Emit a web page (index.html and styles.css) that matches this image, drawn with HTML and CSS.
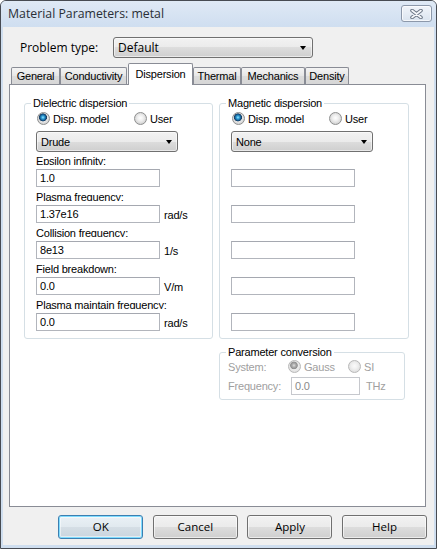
FILE: index.html
```html
<!DOCTYPE html>
<html>
<head>
<meta charset="utf-8">
<link rel="stylesheet" href="styles.css">
</head>
<body>
<div class="window">
  <div class="titlebar">
    <span class="title">Material Parameters: metal</span>
    <div class="close">
      <svg width="13" height="10" viewBox="0 0 13 10">
        <path d="M2 1.5 L11 8.5 M11 1.5 L2 8.5" stroke="#6c7786" stroke-width="3.6" stroke-linecap="round" fill="none"/>
        <path d="M2 1.5 L11 8.5 M11 1.5 L2 8.5" stroke="#f6f8fb" stroke-width="1.6" stroke-linecap="round" fill="none"/>
      </svg>
    </div>
  </div>
  <div class="client">
    <div class="problem-row">
      <span class="problem-label">Problem type:</span>
      <div class="combo combo-problem"><span class="combo-text">Default</span><i class="arrow"></i></div>
    </div>
    <div class="tabstrip">
      <div class="tab t-general">General</div>
      <div class="tab t-cond">Conductivity</div>
      <div class="tab tab-sel t-disp">Dispersion</div>
      <div class="tab t-thermal">Thermal</div>
      <div class="tab t-mech">Mechanics</div>
      <div class="tab t-dens">Density</div>
    </div>
    <div class="panel">
      <fieldset class="group group-diel">
        <legend>Dielectric dispersion</legend>
        <div class="radio-row">
          <span class="ritem ritem-first"><i class="radio on"></i>Disp. model</span>
          <span class="ritem"><i class="radio"></i>User</span>
        </div>
        <div class="combo combo-small"><span class="combo-text">Drude</span><i class="arrow"></i></div>
        <div class="field"><div class="flabel">Epsilon infinity:</div><div class="frow"><div class="tbox">1.0</div></div></div>
        <div class="field"><div class="flabel">Plasma frequency:</div><div class="frow"><div class="tbox">1.37e16</div><span class="unit">rad/s</span></div></div>
        <div class="field"><div class="flabel">Collision frequency:</div><div class="frow"><div class="tbox">8e13</div><span class="unit">1/s</span></div></div>
        <div class="field"><div class="flabel">Field breakdown:</div><div class="frow"><div class="tbox">0.0</div><span class="unit">V/m</span></div></div>
        <div class="field"><div class="flabel">Plasma maintain frequency:</div><div class="frow"><div class="tbox">0.0</div><span class="unit">rad/s</span></div></div>
      </fieldset>
      <div class="right-col">
        <fieldset class="group group-mag">
          <legend>Magnetic dispersion</legend>
          <div class="radio-row">
            <span class="ritem ritem-first"><i class="radio on"></i>Disp. model</span>
            <span class="ritem"><i class="radio"></i>User</span>
          </div>
          <div class="combo combo-small"><span class="combo-text">None</span><i class="arrow"></i></div>
          <div class="field"><div class="flabel"></div><div class="frow"><div class="tbox"></div></div></div>
          <div class="field"><div class="flabel"></div><div class="frow"><div class="tbox"></div></div></div>
          <div class="field"><div class="flabel"></div><div class="frow"><div class="tbox"></div></div></div>
          <div class="field"><div class="flabel"></div><div class="frow"><div class="tbox"></div></div></div>
          <div class="field"><div class="flabel"></div><div class="frow"><div class="tbox"></div></div></div>
        </fieldset>
        <fieldset class="group group-conv">
          <legend>Parameter conversion</legend>
          <div class="conv-row">
            <span class="conv-label">System:</span>
            <span class="ritem ritem-gauss"><i class="radio on dis"></i>Gauss</span>
            <span class="ritem"><i class="radio dis"></i>SI</span>
          </div>
          <div class="conv-row conv-row2">
            <span class="conv-label">Frequency:</span>
            <div class="tbox tbox-conv">0.0</div>
            <span class="unit unit-thz">THz</span>
          </div>
        </fieldset>
      </div>
    </div>
    <div class="buttons">
      <div class="btn btn-default">OK</div>
      <div class="btn">Cancel</div>
      <div class="btn">Apply</div>
      <div class="btn">Help</div>
    </div>
  </div>
</div>
</body>
</html>
```

FILE: styles.css
```css
* { box-sizing: border-box; }
html, body { margin: 0; padding: 0; background: #ffffff; }
body { width: 437px; height: 549px; overflow: hidden; }

.window {
  width: 437px;
  height: 549px;
  border: 1px solid #474b52;
  border-radius: 6px 6px 0 0;
  background: #cfdeef;
  padding: 0 2px 3px 2px;
  display: flex;
  flex-direction: column;
}

.titlebar {
  height: 26px;
  flex: none;
  display: flex;
  justify-content: space-between;
  align-items: flex-start;
  padding-left: 5px;
  background: linear-gradient(#dfe9f5, #cfdef0);
  margin: 0 -2px;
  border-radius: 5px 5px 0 0;
}
.title {
  font-family: "Open Sans", "Noto Sans", sans-serif;
  font-size: 12.3px;
  line-height: 16px;
  padding-top: 5px;
  padding-left: 2px;
  color: #2a2f36;
}
.close {
  margin-top: 4px;
  margin-right: 4px;
  width: 31px;
  height: 17px;
  border: 1px solid #8c98aa;
  border-radius: 3px;
  background: linear-gradient(#f1f5fa, #dbe4ef);
  box-shadow: inset 0 0 0 1px rgba(255,255,255,0.7);
  display: flex;
  align-items: center;
  justify-content: center;
}

.client {
  flex: 1;
  background: #f0f0f0;
  display: flex;
  flex-direction: column;
}

.problem-row {
  display: flex;
  align-items: center;
  margin-top: 10px;
  margin-left: 17px;
  height: 21px;
}
.problem-label {
  width: 93px;
  font-family: "Open Sans", "Noto Sans", sans-serif;
  font-size: 12px;
  color: #000;
}

.combo {
  display: flex;
  align-items: center;
  justify-content: space-between;
  border: 1px solid #707070;
  border-radius: 3px;
  background: linear-gradient(#f2f2f2 0%, #ebebeb 50%, #dddddd 50%, #cfcfcf 100%);
  box-shadow: inset 0 0 0 1px rgba(255,255,255,0.55);
  height: 21px;
}
.combo-problem {
  width: 200px;
  padding: 0 6px 0 4px;
  font-family: "Open Sans", "Noto Sans", sans-serif;
  font-size: 12px;
}
.combo-small {
  width: 142px;
  margin-top: 5px;
  padding: 0 5px 0 4px;
  font-family: "Liberation Sans", Arial, sans-serif;
  font-size: 11px;
  letter-spacing: -0.2px;
}
.arrow {
  width: 0;
  height: 0;
  border-left: 3.5px solid transparent;
  border-right: 3.5px solid transparent;
  border-top: 4px solid #000;
  margin-top: 1px;
}

.tabstrip {
  display: flex;
  align-items: flex-end;
  height: 21px;
  margin-top: 5px;
  margin-left: 8px;
  font-family: "Liberation Sans", Arial, sans-serif;
  font-size: 11px;
  letter-spacing: -0.2px;
}
.tab {
  flex: none;
  height: 17px;
  border: 1px solid #898c95;
  border-bottom: none;
  border-radius: 2px 2px 0 0;
  background: linear-gradient(#f4f4f4, #e6e6e6 50%, #dcdcdc 51%, #d6d6d6);
  text-align: center;
  line-height: 16px;
  color: #000;
}
.tab-sel {
  height: 22px;
  margin-bottom: -1px;
  background: #ffffff;
  line-height: 15px;
  padding-top: 3px;
  z-index: 2;
}
.t-general { width: 49px; }
.t-cond { width: 67px; }
.t-disp { width: 65px; margin-left: 1px; }
.t-thermal { width: 48px; }
.t-mech { width: 64px; }
.t-dens { width: 44px; }

.panel {
  margin-left: 6px;
  width: 417px;
  height: 423px;
  border: 1px solid #898c95;
  background: #ffffff;
  padding: 11px 0 0 14px;
  display: flex;
  align-items: flex-start;
  gap: 6px;
  font-family: "Liberation Sans", Arial, sans-serif;
  font-size: 11px;
  letter-spacing: -0.2px;
  color: #000;
}

.group {
  margin: 0;
  min-width: 0;
  border: 1px solid #d5dfe5;
  border-radius: 3px;
  padding: 1px 11px 7px 11px;
}
.group legend {
  padding: 0 2px;
  margin-left: -5px;
  line-height: 14px;
  font-size: 11px;
}
.group-diel { width: 189px; }
.group-mag { width: 190px; }
.right-col {
  display: flex;
  flex-direction: column;
}

.radio-row {
  display: flex;
  align-items: center;
  height: 15px;
}
.ritem {
  display: flex;
  align-items: center;
}
.ritem-first { width: 97px; }
.radio {
  display: block;
  width: 13px;
  height: 13px;
  margin-left: 1px;
  margin-right: 3px;
  border-radius: 50%;
  border: 1px solid #8e8f8f;
  background: radial-gradient(circle at 50% 45%, #ffffff 0, #eeeeee 3px, #d3d3d3 6px);
}
.radio.on {
  background:
    radial-gradient(circle at 45% 40%, #9be6ff 0, #36a6dc 1.4px, #11588f 3px, #1b3b5c 3.7px, rgba(0,0,0,0) 4.3px),
    radial-gradient(circle at 50% 45%, #ffffff 0, #eeeeee 3px, #d3d3d3 6px);
}
.radio.dis { border-color: #b8b8b8; background: radial-gradient(circle at 50% 45%, #fafafa 0, #f0f0f0 3px, #e0e0e0 6px); }
.radio.on.dis {
  background:
    radial-gradient(circle at 45% 40%, #e0e0e0 0, #b0b0b0 1.6px, #8e8e8e 3.4px, rgba(0,0,0,0) 4.2px),
    radial-gradient(circle at 50% 45%, #fafafa 0, #f0f0f0 3px, #e0e0e0 6px);
}

.field { margin-top: 3px; }
.field + .field { margin-top: 4px; }
.flabel {
  height: 10px;
  line-height: 12px;
  overflow: hidden;
  white-space: nowrap;
}
.frow {
  display: flex;
  align-items: center;
  margin-top: 4px;
}
.tbox {
  width: 124px;
  height: 18px;
  border: 1px solid #b2b5bc;
  border-top-color: #a5a8b0;
  background: #ffffff;
  padding-left: 3px;
  line-height: 16px;
  white-space: nowrap;
}
.unit { margin-left: 4px; padding-top: 2px; }

.group-conv {
  width: 186px;
  margin-top: 6px;
  padding: 0 8px 4px 8px;
}
.group-conv legend { margin-left: -2px; }
.conv-row {
  display: flex;
  align-items: center;
  height: 15px;
  color: #a0a0a0;
}
.conv-row2 { height: 18px; margin-top: 3px; }
.conv-label { width: 60px; }
.ritem-gauss { width: 60px; }
.ritem .radio.dis { margin-left: 0; }
.tbox-conv {
  width: 69px;
  margin-left: 3px;
  color: #8a8a8a;
  border-color: #c6c8cd;
}
.unit-thz { margin-left: 6px; padding-top: 0; }

.buttons {
  display: flex;
  justify-content: flex-end;
  gap: 9.6px;
  margin-top: 8px;
  margin-right: 7px;
}
.btn {
  width: 85px;
  height: 24px;
  border: 1px solid #707070;
  border-radius: 3px;
  background: linear-gradient(#f2f2f2 0%, #ebebeb 50%, #dddddd 50%, #cfcfcf 100%);
  box-shadow: inset 0 0 0 1px rgba(255,255,255,0.6);
  font-family: "Open Sans", "Noto Sans", sans-serif;
  font-size: 11.5px;
  line-height: 22px;
  text-align: center;
  color: #000;
}
.btn-default {
  border-color: #3c7fb1;
  box-shadow: inset 0 0 0 1px #7fdcff, inset 0 0 0 2px rgba(255,255,255,0.5);
  background: linear-gradient(#eaf1f6 0%, #e1e9ef 50%, #d5dee5 50%, #cad5de 100%);
}
```
